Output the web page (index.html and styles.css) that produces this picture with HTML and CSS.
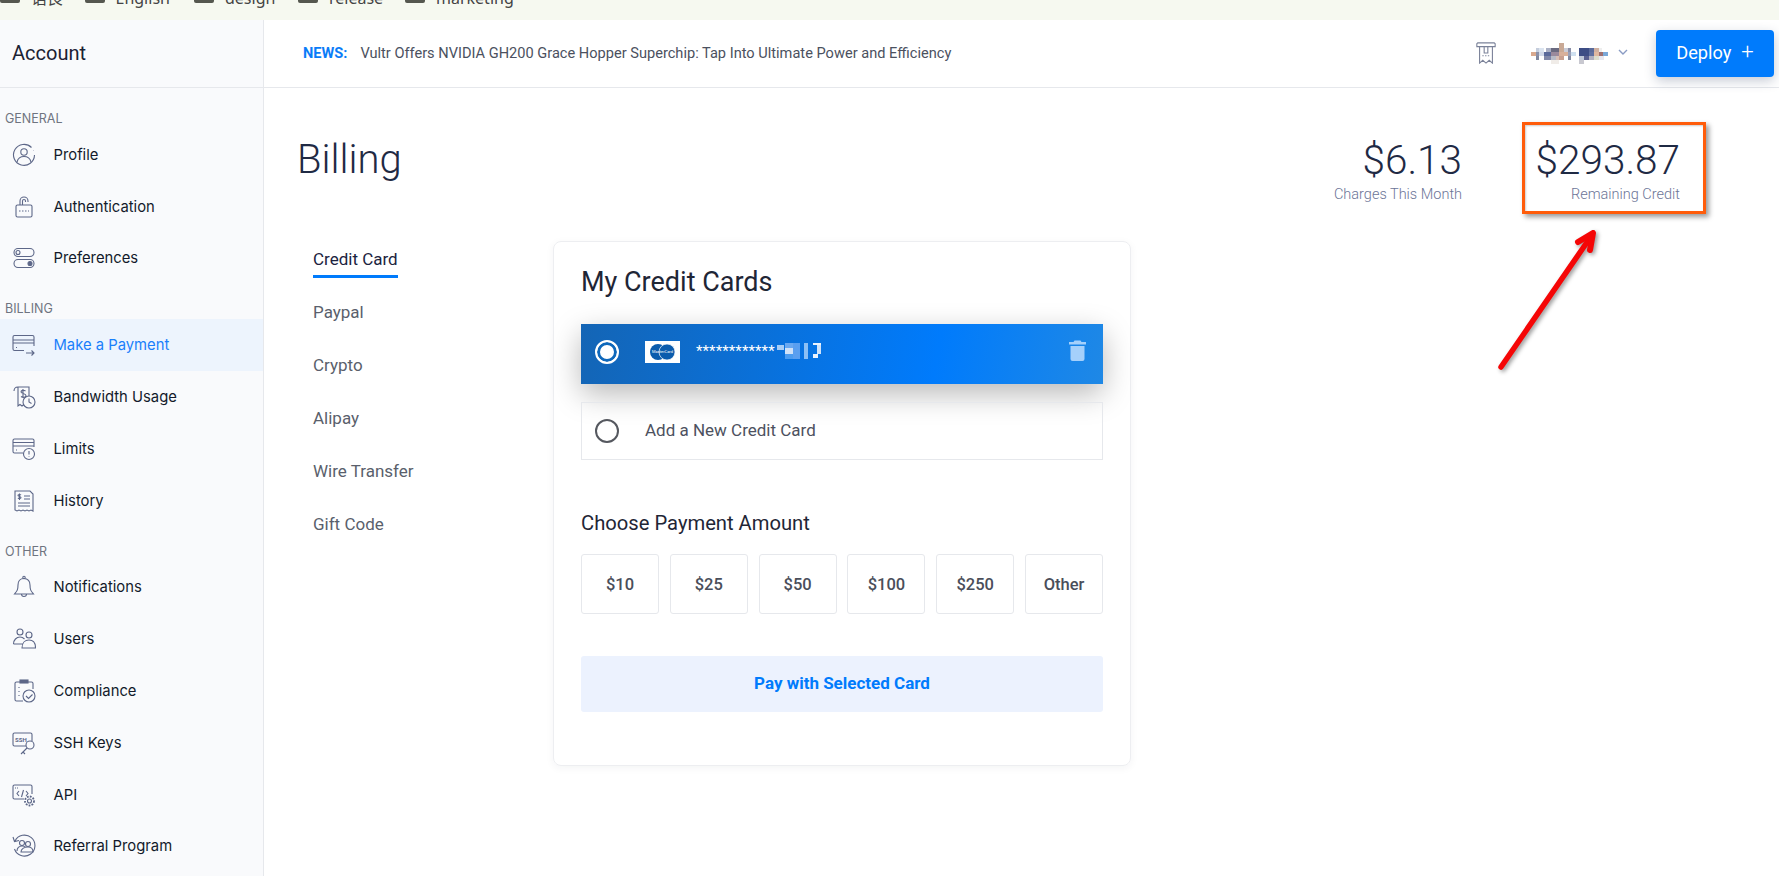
FILE: index.html
```html
<!DOCTYPE html>
<html>

<head>
  <title>Billing</title>
  <link rel="stylesheet" href="styles.css">
</head>

<body>
  <div class="bookmarks">
    <span class="bm bm-a"><i></i>语良</span>
    <span class="bm bm-b"><i></i>English</span>
    <span class="bm bm-c"><i></i>design</span>
    <span class="bm bm-d"><i></i>release</span>
    <span class="bm"><i></i>marketing</span>
  </div>

  <div class="app">
    <aside class="sidebar">
      <div class="side-title">Account</div>
      <div class="side-nav">
        <div class="side-label">General</div>
        <a class="side-item">
          <svg viewBox="0 0 24 24"><path d="M19.500 4.500A10.500 10.500 0 1 0 22.500 12"/><path d="M21.500 7v.3"/><circle cx="12" cy="9" r="3.200"/><path d="M5 19c1-4 4-5.500 7-5.500s6 1.500 7 5.500"/></svg>
          Profile
        </a>
        <a class="side-item">
          <svg viewBox="0 0 24 24"><rect x="4" y="10" width="16" height="12" rx="1.500"/><path d="M8 10V6a4 4 0 0 1 8 0v1M10.500 10V6a1.500 1.500 0 0 1 3 0v1"/><path d="M7 16h10" stroke-dasharray="1.500 1.500"/></svg>
          Authentication
        </a>
        <a class="side-item">
          <svg viewBox="0 0 24 24"><rect x="2" y="2.500" width="20" height="8" rx="4"/><circle cx="6" cy="6.500" r="2"/><rect x="2" y="13.500" width="20" height="8" rx="4"/><circle cx="18" cy="17.500" r="2" fill="#5d6788"/></svg>
          Preferences
        </a>

        <div class="side-label">Billing</div>
        <a class="side-item active">
          <svg viewBox="0 0 24 24"><path d="M22 13V4a1.500 1.500 0 0 0-1.500-1.500h-18A1.500 1.500 0 0 0 1 4v12a1.500 1.500 0 0 0 1.500 1.500H12"/><path d="M1 7h21M1 10h21M4 14.500h1M14 20h8M19.500 17.500L22 20l-2.500 2.500"/></svg>
          Make a Payment
        </a>
        <a class="side-item">
          <svg viewBox="0 0 24 24"><path d="M6 2h11v9M6 2C3 2 2 4 2 6M6 2v19l2-1.500 2 1.500 2-1.500"/><path d="M11 4v9M13.500 6c-2-1.500-4.500-.5-4.500 1s5 1.500 5 3.500-3 2.500-5 1"/><circle cx="17" cy="17" r="6"/><path d="M17 13.500V17l2.500 1.500"/></svg>
          Bandwidth Usage
        </a>
        <a class="side-item">
          <svg viewBox="0 0 24 24"><path d="M22 10V3.500A1.500 1.500 0 0 0 20.500 2h-18A1.500 1.500 0 0 0 1 3.500v11A1.500 1.500 0 0 0 2.500 16H11"/><path d="M1 5.500h21M1 9h21M4 13h1"/><circle cx="17" cy="17" r="5.500"/><path d="M17 14v3.500M17 19.500v.5"/></svg>
          Limits
        </a>
        <a class="side-item">
          <svg viewBox="0 0 24 24"><path d="M3 2h15l3 3v17l-2-1-2 1-2-1-2 1-2-1-2 1-2-1-2 1-2-1z"/><path d="M12 7h6M12 10h6M6 14h12M6 17h12"/><path d="M9 6c-1-1-3-.5-3 .5s3 1 3 2-2 1.500-3 .5M7.500 4.500v6.500"/></svg>
          History
        </a>

        <div class="side-label">Other</div>
        <a class="side-item">
          <svg viewBox="0 0 24 24"><path d="M12 3.500c-4 0-6 3-6 6.500 0 5-1 6-3.500 9h19c-2.500-3-3.500-4-3.500-9 0-3.500-2-6.500-6-6.500z"/><circle cx="12" cy="2.500" r="1.200"/><path d="M9.500 19a2.500 2.500 0 0 0 5 0"/></svg>
          Notifications
        </a>
        <a class="side-item">
          <svg viewBox="0 0 24 24"><circle cx="8" cy="5" r="3"/><circle cx="17" cy="8" r="3"/><path d="M1.500 17c0-4 3-7 6.500-7 2 0 3.500 1 4.500 2M1.500 17h9M10 21c0-5 3-8 7-8s6.500 3 6.500 8z"/></svg>
          Users
        </a>
        <a class="side-item">
          <svg viewBox="0 0 24 24"><path d="M8 3H4.500A1.500 1.500 0 0 0 3 4.500v16A1.500 1.500 0 0 0 4.500 22H11M16 3h3.500A1.500 1.500 0 0 1 21 4.500V10"/><rect x="8" y="1" width="8" height="3" fill="#5d6788"/><path d="M7 8v1M7 12v1M7 16v1"/><circle cx="17" cy="17" r="6"/><path d="M14 17l2.500 2.500 4-4"/></svg>
          Compliance
        </a>
        <a class="side-item">
          <svg viewBox="0 0 24 24"><path d="M14 15H2.500A1.500 1.500 0 0 1 1 13.500v-10A1.500 1.500 0 0 1 2.500 2h16A1.500 1.500 0 0 1 20 3.500V10"/><text x="3" y="10.500" class="ssh">SSH</text><circle cx="18" cy="14" r="4"/><path d="M15 17l-6 6M11 21l2 2"/></svg>
          SSH Keys
        </a>
        <a class="side-item">
          <svg viewBox="0 0 24 24"><path d="M12 16H2.500A1.500 1.500 0 0 1 1 14.500v-11A1.500 1.500 0 0 1 2.500 2h16A1.500 1.500 0 0 1 20 3.500V11"/><path d="M3 5h4" stroke-dasharray="1 1"/><path d="M7 8l-2 2.500L7 13M14 8l2 2.500-2 2.500M11.500 7l-2 7"/><circle cx="17.500" cy="18" r="2"/><circle cx="17.500" cy="18" r="4.500" stroke-width="1.800" stroke-dasharray="1.800 1.200"/></svg>
          API
        </a>
        <a class="side-item">
          <svg viewBox="0 0 24 24"><path d="M3 7a10.500 10.500 0 1 1-.5 8M1 3l1.500 4.500L7 6.500"/><circle cx="10" cy="9" r="2.500"/><circle cx="16" cy="10" r="2.500"/><path d="M5 17c0-3 2-5 5-5s4 1.500 4 1.500M9 18c0-3 3-5 7-5 3 0 5 2 5 5z"/></svg>
          Referral Program
        </a>
      </div>
    </aside>

    <div class="main">
      <header class="topbar">
        <div class="news"><b>NEWS:</b>Vultr Offers NVIDIA GH200 Grace Hopper Superchip: Tap Into Ultimate Power and Efficiency</div>
        <svg class="receipt" viewBox="0 0 22 24"><path d="M2 1h18l1 1v3H1V2zM4 5v18l3.500-3 3.500 3 3.500-3 3.500 3V5M9 5v7h4V5"/><path d="M7 15h8" stroke-dasharray="1.500 1.500"/></svg>
        <svg class="mosaic" viewBox="0 0 77 21" shape-rendering="crispEdges">
          <rect x="28" y="0" width="5" height="5" fill="#c9a995"/>
          <rect x="5" y="5" width="3" height="4" fill="#c5cddc"/><rect x="8" y="5" width="5" height="4" fill="#dbe4f0"/><rect x="15" y="5" width="5" height="4" fill="#aab0c4"/><rect x="20" y="5" width="8" height="4" fill="#6a6a80"/><rect x="28" y="5" width="5" height="4" fill="#c9a995"/><rect x="33" y="5" width="4" height="4" fill="#c9cbd6"/><rect x="37" y="5" width="3" height="4" fill="#8a8fa8"/><rect x="48" y="5" width="10" height="4" fill="#3d4d85"/><rect x="58" y="5" width="5" height="4" fill="#5a6a9a"/><rect x="63" y="5" width="5" height="4" fill="#d0b0a0"/><rect x="68" y="5" width="3" height="4" fill="#eeeeee"/>
          <rect x="0" y="9" width="5" height="4" fill="#d8a98f"/><rect x="5" y="9" width="3" height="4" fill="#8a90a8"/><rect x="8" y="9" width="5" height="4" fill="#d0d8e8"/><rect x="13" y="9" width="7" height="4" fill="#5a6a9a"/><rect x="20" y="9" width="8" height="4" fill="#9a8a9c"/><rect x="28" y="9" width="9" height="4" fill="#d8b09a"/><rect x="37" y="9" width="3" height="4" fill="#9aa0b8"/><rect x="40" y="9" width="5" height="4" fill="#cfe0f0"/><rect x="48" y="9" width="10" height="4" fill="#3d4d85"/><rect x="58" y="9" width="5" height="4" fill="#6070a0"/><rect x="63" y="9" width="5" height="4" fill="#e0b8a0"/><rect x="68" y="9" width="4" height="4" fill="#a07070"/><rect x="72" y="9" width="5" height="4" fill="#7aa8d8"/>
          <rect x="5" y="13" width="3" height="4" fill="#8088a0"/><rect x="13" y="13" width="7" height="4" fill="#8088a8"/><rect x="20" y="13" width="5" height="4" fill="#b8bcc8"/><rect x="25" y="13" width="3" height="4" fill="#d8c0b8"/><rect x="28" y="13" width="5" height="4" fill="#c8a090"/><rect x="37" y="13" width="3" height="4" fill="#8088a0"/><rect x="48" y="13" width="5" height="4" fill="#c0c8d8"/><rect x="53" y="13" width="5" height="4" fill="#5a6090"/><rect x="58" y="13" width="5" height="4" fill="#b0b0c0"/><rect x="63" y="13" width="5" height="4" fill="#ddddcc"/><rect x="68" y="13" width="5" height="4" fill="#e8e8f0"/>
          <rect x="20" y="17" width="8" height="4" fill="#f0ece8"/><rect x="48" y="17" width="5" height="4" fill="#c8c8d0"/>
        </svg>
        <svg class="chevron" viewBox="0 0 10 6"><path d="M1 1l4 4 4-4"/></svg>
        <button class="deploy">Deploy<span>+</span></button>
      </header>

      <div class="content">
        <div class="page-head">
          <h1>Billing</h1>
          <div class="stats">
            <div class="stat">
              <strong>$6.13</strong>
              <small>Charges This Month</small>
            </div>
            <div class="stat">
              <strong>$293.87</strong>
              <small>Remaining Credit</small>
            </div>
          </div>
        </div>

        <div class="billing">
          <ul class="tabs">
            <li class="on"><span>Credit Card</span></li>
            <li><span>Paypal</span></li>
            <li><span>Crypto</span></li>
            <li><span>Alipay</span></li>
            <li><span>Wire Transfer</span></li>
            <li><span>Gift Code</span></li>
          </ul>

          <section class="card">
            <h2>My Credit Cards</h2>
            <div class="pay-row selected">
              <span class="radio"></span>
              <svg class="mc" viewBox="0 0 35 22">
                <rect width="35" height="22" fill="#fff"/>
                <circle cx="13" cy="11" r="8" fill="#0b5cad"/>
                <circle cx="22" cy="11" r="8" fill="#0b5cad" stroke="#fff" stroke-width=".7"/>
                <text x="17.500" y="12.400" class="mc-text">MasterCard</text>
              </svg>
              <span class="stars">************</span>
              <svg class="mosaic-card" viewBox="0 0 44 16" shape-rendering="crispEdges">
                <rect x="0" y="2" width="7" height="5" fill="#a8cdf5"/><rect x="8" y="0" width="8" height="5" fill="#6aa8f0"/><rect x="16" y="0" width="7" height="16" fill="#5a9ff0"/><rect x="8" y="5" width="8" height="6" fill="#d0e2f8"/><rect x="8" y="11" width="8" height="5" fill="#4b9cf0"/><rect x="27" y="0" width="4" height="16" fill="#8cc0f5"/><rect x="36" y="0" width="8" height="2" fill="#eaf3fd"/><rect x="40" y="2" width="4" height="9" fill="#d0e3fa"/><rect x="36" y="11" width="5" height="4" fill="#eaf3fd"/>
              </svg>
              <svg class="trash" viewBox="0 0 17 22"><path d="M5.500 1.500h6l1 1.500H17v2.500H0V3h4.500zM1.500 7h14v13a2 2 0 0 1-2 2h-10a2 2 0 0 1-2-2z"/></svg>
            </div>
            <div class="pay-row">
              <span class="radio"></span>
              <span class="add-text">Add a New Credit Card</span>
            </div>

            <h3>Choose Payment Amount</h3>
            <div class="amounts">
              <button>$10</button>
              <button>$25</button>
              <button>$50</button>
              <button>$100</button>
              <button>$250</button>
              <button>Other</button>
            </div>
            <button class="pay">Pay with Selected Card</button>
          </section>
        </div>
      </div>
    </div>
  </div>

  <div class="highlight"></div>
  <svg class="arrow" viewBox="0 0 120 150">
    <path class="arrow-line" d="M7 141L98 9"/>
    <path class="arrow-head" d="M84 16L99 7 96 24"/>
  </svg>
</body>

</html>
```

FILE: styles.css
```css
* {
  box-sizing: border-box;
}

html, body {
  height: 100%;
}

body {
  margin: 0;
  overflow: hidden;
  font-family: Roboto, "Noto Sans CJK SC", sans-serif;
  background: #fff;
  color: #1f2a44;
}

.bookmarks {
  height: 20px;
  background: #f6f9f0;
  display: flex;
  overflow: hidden;
  font-family: "Noto Sans", "Noto Sans CJK SC", sans-serif;
  font-size: 16px;
  line-height: 14px;
  color: #444;
}

.bm {
  display: flex;
  gap: 11px;
  margin-top: -9px;
  height: 14px;
}

.bm i {
  display: block;
  width: 20px;
  height: 12px;
  background: #55584f;
  border-radius: 2px;
}

.bm-a { width: 84.500px; }
.bm-b { width: 109.500px; }
.bm-c { width: 104px; }
.bm-d { width: 107px; }

.app {
  display: flex;
  height: 856px;
}

.sidebar {
  width: 264px;
  flex: none;
  background: #f9fafc;
  border-right: 1px solid #e6e8ec;
}

.side-title {
  height: 68px;
  border-bottom: 1px solid #e6e8ec;
  padding: 0 12px;
  font-size: 20px;
  line-height: 66px;
  color: #1b2233;
}

.side-nav {
  padding-top: 21px;
}

.side-label {
  height: 20px;
  margin-top: 15px;
  padding-left: 5px;
  font-family: Inter, sans-serif;
  font-size: 12.500px;
  line-height: 19px;
  color: #6f7480;
  text-transform: uppercase;
}

.side-label:first-child {
  margin-top: 0;
}

.side-item {
  display: flex;
  align-items: center;
  gap: 17.500px;
  height: 51.800px;
  padding-left: 12px;
  font-family: Inter, sans-serif;
  font-size: 14.800px;
  color: #131a2b;
}

.side-item svg {
  width: 24px;
  height: 24px;
  flex: none;
  fill: none;
  stroke: #5d6788;
  stroke-width: 1.100;
}

.side-item .ssh {
  font-family: Roboto, sans-serif;
  font-size: 6px;
  font-weight: 700;
  fill: #5d6788;
  stroke: none;
}

.side-item.active {
  background: #edf4fd;
  color: #1a7ffb;
}

.main {
  flex: 1;
  min-width: 0;
}

.topbar {
  height: 68px;
  border-bottom: 1px solid #e6e8ec;
  display: flex;
  align-items: center;
  padding: 0 5px 0 39px;
}

.news {
  flex: 1;
  margin-top: -1px;
  font-size: 14.600px;
  color: #4b5160;
}

.news b {
  color: #0a7cf8;
  margin-right: 13px;
}

.receipt {
  width: 22px;
  height: 22px;
  margin: -2px 34px 0 0;
  fill: none;
  stroke: #7b8299;
  stroke-width: 1.200;
}

.mosaic {
  width: 77px;
  height: 21px;
}

.chevron {
  width: 10px;
  height: 6px;
  margin: -4px 28px 0 10px;
  fill: none;
  stroke: #8a9cc4;
  stroke-width: 1.400;
}

.deploy {
  width: 118px;
  height: 47px;
  padding-bottom: 3px;
  border: none;
  border-radius: 4px;
  background: #007bfc;
  color: #fff;
  font-family: Roboto, sans-serif;
  font-size: 18.200px;
  box-shadow: 0 4px 12px rgba(30, 50, 90, 0.25);
}

.deploy span {
  margin-left: 10px;
  font-size: 22px;
  line-height: 18px;
  font-weight: 300;
}

.content {
  padding: 0 0 0 33px;
}

.page-head {
  display: flex;
  justify-content: space-between;
  height: 153px;
  padding-top: 46px;
}

h1 {
  margin: 0;
  font-size: 40px;
  font-weight: 300;
  line-height: 52px;
  color: #1f2a44;
}

.stats {
  display: flex;
  gap: 73.500px;
  padding-right: 99px;
}

.stat {
  display: flex;
  flex-direction: column;
  align-items: flex-end;
}

.stat strong {
  font-size: 40.500px;
  font-weight: 300;
  line-height: 52px;
  color: #1f2a44;
}

.stat small {
  font-size: 14.500px;
  font-weight: 300;
  line-height: 20px;
  margin-top: -1px;
  color: #6c7597;
}

.billing {
  display: flex;
  align-items: flex-start;
}

.tabs {
  list-style: none;
  margin: 0;
  padding: 0 0 0 16px;
  width: 256px;
  font-size: 17px;
  color: #5a5f6c;
}

.tabs li {
  height: 53px;
  padding-top: 6.500px;
}

.tabs span {
  display: inline-block;
  height: 30.500px;
  line-height: 22px;
}

.tabs .on span {
  color: #1b2340;
  border-bottom: 3px solid #007bfc;
}

.card {
  width: 578px;
  height: 525px;
  border: 1px solid #edeef1;
  border-radius: 8px;
  box-shadow: 0 2px 8px rgba(20, 30, 60, 0.05);
  padding: 23px 27px 0;
}

h2 {
  margin: 0 0 25px;
  font-size: 27px;
  font-weight: 400;
  line-height: 34px;
  color: #1f2636;
}

.pay-row {
  display: flex;
  align-items: center;
  height: 58px;
  margin-bottom: 17px;
  padding-left: 13px;
  border: 1px solid #e6e8ec;
  color: #4d5160;
}

.pay-row.selected {
  height: 60px;
  margin-bottom: 18px;
  padding-left: 14px;
  border: none;
  background: linear-gradient(100deg, #1465b5 0%, #007bfc 68%, #1f88e5 100%);
  box-shadow: 0 10px 30px rgba(0, 0, 0, 0.28);
  color: #fff;
}

.radio {
  width: 24px;
  height: 24px;
  flex: none;
  margin-top: -1px;
  margin-right: 26px;
  border: 2.500px solid #55585f;
  border-radius: 50%;
}

.selected .radio {
  margin-top: -4px;
  border-color: #fff;
  box-shadow: inset 0 0 0 3px #0f68bb;
  background: #fff;
}

.mc {
  width: 35px;
  height: 22px;
  margin-top: -5px;
  flex: none;
}

.mc-text {
  font-family: Roboto, sans-serif;
  font-size: 4px;
  text-anchor: middle;
  fill: #fff;
}

.stars {
  margin: -6px 0 0 16px;
  font-size: 15px;
  line-height: 20px;
  letter-spacing: 0.100px;
}

.mosaic-card {
  width: 44px;
  height: 16px;
  margin: -6px 0 0 2px;
}

.trash {
  width: 17px;
  height: 22px;
  margin: -9px 17px 0 auto;
  fill: #a5d0fb;
}

.add-text {
  margin-top: -3px;
  font-size: 17px;
}

h3 {
  margin: 0 0 17px;
  padding-top: 32px;
  font-size: 20.200px;
  font-weight: 400;
  line-height: 28px;
  color: #1f2636;
}

.amounts {
  display: grid;
  grid-template-columns: repeat(6, 1fr);
  gap: 10.800px;
}

.amounts button {
  height: 60px;
  border: 1px solid #e6e8ec;
  border-radius: 3px;
  background: #fff;
  font-family: Roboto, sans-serif;
  font-size: 16.500px;
  font-weight: 500;
  color: #4a4e5a;
}

.pay {
  display: block;
  width: 100%;
  height: 56px;
  margin-top: 42px;
  padding-bottom: 3px;
  border: none;
  border-radius: 3px;
  background: #ecf2fe;
  font-family: Roboto, sans-serif;
  font-size: 17px;
  font-weight: 700;
  color: #007bfc;
}

/* annotation drawn on top of the screenshot */
.highlight {
  position: absolute;
  left: 1522px;
  top: 122px;
  width: 184px;
  height: 92px;
  border: 3px solid #ff5c0a;
  box-shadow: 3px 3px 5px rgba(0, 0, 0, 0.4), inset 1px 1px 2px rgba(0, 0, 0, 0.2);
}

.arrow {
  position: absolute;
  left: 1494px;
  top: 226px;
  width: 120px;
  height: 150px;
  fill: none;
  filter: drop-shadow(2px 2px 2px rgba(0, 0, 0, 0.4));
}

.arrow-line {
  stroke: #f50606;
  stroke-width: 5.500;
  stroke-linecap: round;
}

.arrow-head {
  stroke: #f50606;
  stroke-width: 6;
  stroke-linecap: round;
  stroke-linejoin: round;
}
```
